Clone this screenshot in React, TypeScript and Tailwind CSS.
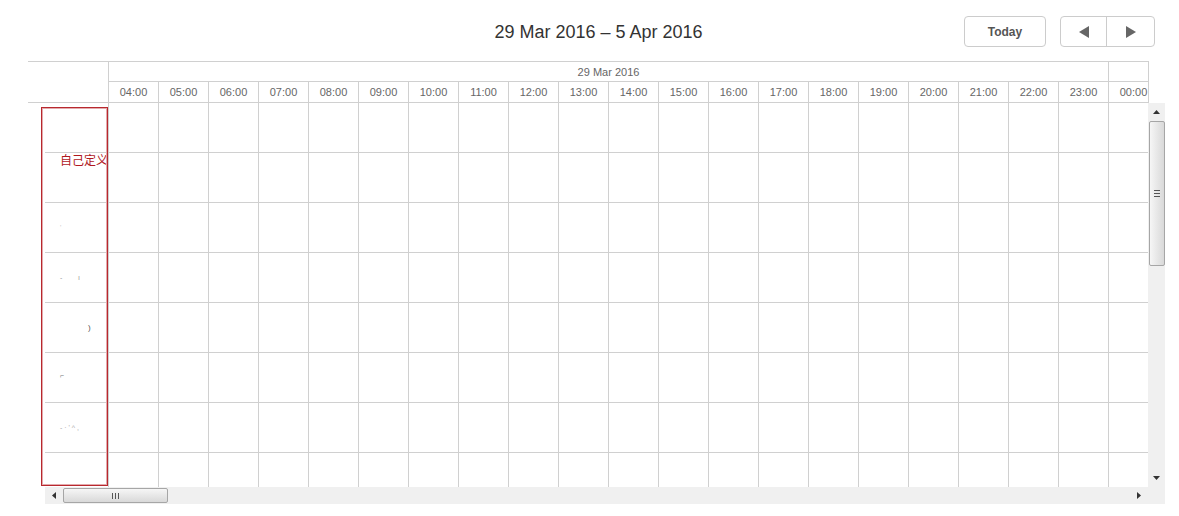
import React from "react";

const hours = [
  "04:00","05:00","06:00","07:00","08:00","09:00","10:00","11:00","12:00","13:00",
  "14:00","15:00","16:00","17:00","18:00","19:00","20:00","21:00","22:00","23:00",
];

const labels: React.ReactNode[] = [
  null,
  <span className="block text-[#b0181e] text-[12px] leading-[14px] pt-px">自己定义</span>,
  <span className="text-[#c8c8c8] text-[7px] leading-[14px] pl-[15px] pt-[18px] block text-left">'</span>,
  <span className="text-[#9a9a9a] text-[7px] leading-[14px] pl-[15px] pt-[18px] block text-left">-&nbsp;&nbsp;&nbsp;&nbsp;&nbsp;&nbsp;&nbsp;&nbsp;ı</span>,
  <span className="text-[#555] text-[8px] leading-[14px] pl-[43px] pt-[18px] block text-left">)</span>,
  <span className="text-[#777] text-[7px] leading-[14px] pl-[15px] pt-[16px] block text-left">⌐</span>,
  <span className="text-[#aaa] text-[7px] leading-[14px] pl-[15px] pt-[18px] block text-left">- · ' ^ ,</span>,
  <span className="text-[#555] text-[7px] leading-[14px] pl-[45px] pt-[24px] block text-left">.</span>,
];

function Row({ label }: { label: React.ReactNode }) {
  return (
    <div className="flex h-[50px] shrink-0 border-b border-[#d0d0d0]">
      <div className="w-[63px] shrink-0 text-right overflow-hidden leading-[14px] text-[12px]">{label}</div>
      {hours.map((h) => (
        <div key={h} className="w-[50px] shrink-0 border-l border-[#d0d0d0]" />
      ))}
      <div className="w-[40px] shrink-0 border-l border-[#d0d0d0]" />
    </div>
  );
}

export default function App() {
  return (
    <div className="relative w-[1179px] h-[516px] overflow-hidden bg-white font-['Liberation_Sans','Noto_Sans_CJK_SC',sans-serif]">
      {/* Toolbar */}
      <div className="flex items-start h-[61px] pt-[16px] pr-[24px]">
        <div className="flex-1 pl-[233px] pt-px text-center text-[18px] leading-[31px] text-[#333]">
          29 Mar 2016 – 5 Apr 2016
        </div>
        <button className="w-[82px] h-[31px] rounded-[4px] border border-[#cccccc] bg-white text-[12px] font-bold text-[#555] leading-none">
          Today
        </button>
        <div className="ml-[14px] flex w-[95px] h-[31px] rounded-[4px] border border-[#cccccc] bg-white">
          <div className="w-[46px] flex items-center justify-center border-r border-[#cccccc]">
            <svg width="10" height="12" viewBox="0 0 10 12">
              <polygon points="10,0 10,12 0,6" fill="#666" />
            </svg>
          </div>
          <div className="flex-1 flex items-center justify-center">
            <svg width="10" height="12" viewBox="0 0 10 12">
              <polygon points="0,0 0,12 10,6" fill="#666" />
            </svg>
          </div>
        </div>
      </div>

      {/* Header */}
      <div className="ml-[28px] w-[1121px] border-t border-b border-[#d0d0d0] text-[11px] text-[#666]">
        <div className="flex h-[20px]">
          <div className="w-[80px] shrink-0" />
          <div className="w-[1000px] shrink-0 border-l border-b border-[#d0d0d0] flex items-center justify-center leading-none pt-px">
            29 Mar 2016
          </div>
          <div className="w-[41px] shrink-0 border-l border-r border-b border-[#d0d0d0]" />
        </div>
        <div className="flex h-[20px]">
          <div className="w-[80px] shrink-0" />
          {hours.map((h) => (
            <div key={h} className="w-[50px] shrink-0 border-l border-[#d0d0d0] flex items-center justify-center leading-none">
              {h}
            </div>
          ))}
          <div className="w-[41px] shrink-0 border-l border-r border-[#d0d0d0] overflow-hidden flex items-center">
            <div className="w-[49px] shrink-0 text-center leading-none">00:00</div>
          </div>
        </div>
      </div>

      {/* Body */}
      <div className="ml-[45px] flex">
        <div className="w-[1103px] h-[384px] overflow-hidden flex flex-col">
          {labels.map((l, i) => (
            <Row key={i} label={l} />
          ))}
        </div>
        <div className="w-[17px] h-[384px] bg-[#f0f0f0] flex flex-col items-center">
          <div className="h-[18px] flex items-center justify-center">
            <svg width="7" height="4" viewBox="0 0 7 4">
              <polygon points="0,4 7,4 3.5,0" fill="#333" />
            </svg>
          </div>
          <div className="w-[16px] h-[145px] ml-px rounded-[2px] border border-[#a6a6a6] bg-linear-to-r from-[#f6f6f6] to-[#d9d9d9] flex flex-col items-center justify-center gap-[2px]">
            <div className="w-[6px] h-px bg-[#555]" />
            <div className="w-[6px] h-px bg-[#555]" />
            <div className="w-[6px] h-px bg-[#555]" />
          </div>
          <div className="flex-1" />
          <div className="h-[18px] flex items-center justify-center">
            <svg width="7" height="4" viewBox="0 0 7 4">
              <polygon points="0,0 7,0 3.5,4" fill="#333" />
            </svg>
          </div>
        </div>
      </div>
      <div className="ml-[45px] flex h-[17px]">
        <div className="w-[1103px] h-[17px] bg-[#f0f0f0] flex items-center">
          <div className="w-[18px] flex items-center justify-center">
            <svg width="4" height="7" viewBox="0 0 4 7">
              <polygon points="4,0 4,7 0,3.5" fill="#333" />
            </svg>
          </div>
          <div className="w-[105px] h-[15px] rounded-[2px] border border-[#a6a6a6] bg-linear-to-b from-[#f6f6f6] to-[#d9d9d9] flex items-center justify-center gap-[2px]">
            <div className="w-px h-[6px] bg-[#555]" />
            <div className="w-px h-[6px] bg-[#555]" />
            <div className="w-px h-[6px] bg-[#555]" />
          </div>
          <div className="flex-1" />
          <div className="w-[18px] flex items-center justify-center">
            <svg width="4" height="7" viewBox="0 0 4 7">
              <polygon points="0,0 0,7 4,3.5" fill="#333" />
            </svg>
          </div>
        </div>
        <div className="w-[17px] h-[17px] bg-[#f0f0f0]" />
      </div>

      {/* Highlight box */}
      <div className="absolute left-[41px] top-[107px] w-[67px] h-[379px] pointer-events-none border border-[#b8282e]">
        <div className="w-full h-full border border-[#e3aaad]" />
      </div>
    </div>
  );
}
